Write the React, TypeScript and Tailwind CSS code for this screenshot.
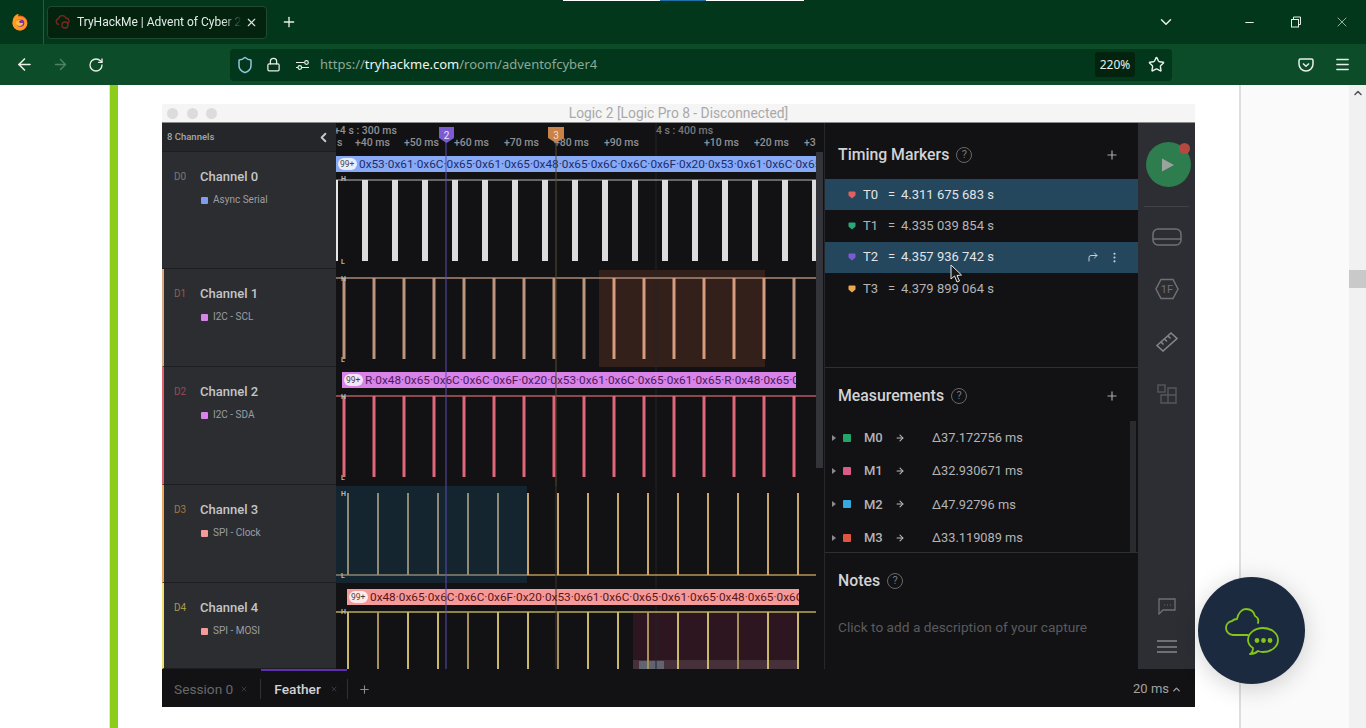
import React from "react";
import { ArrowLeft, ArrowRight, RotateCw, Plus, X, ChevronDown, ChevronLeft, ChevronUp, Minus, Shield, Lock, Star, Menu, CornerUpRight, EllipsisVertical } from "lucide-react";

const range = (start: number, count: number, step = 30) => Array.from({ length: count }, (_, i) => start + i * step);
const hex = (s: string) => s.split(" ").join("\u00B7");

function Waves() {
  const roboto = "Roboto, sans-serif";
  const ruler2: [number, string][] = [[337, "s"], [355, "+40 ms"], [404, "+50 ms"], [454, "+60 ms"], [504, "+70 ms"], [554, "+80 ms"], [604, "+90 ms"], [704, "+10 ms"], [754, "+20 ms"], [804, "+30"]];
  const bubble = (id: string, x: number, y: number, w: number, fill: string, pillFill: string, tx: number, color: string, text: string) => (
    <g>
      <clipPath id={id}><rect x={x} y={y} width={w} height={16} /></clipPath>
      <rect x={x} y={y} width={w} height={16} fill={fill} />
      <rect x={x + 2} y={y + 2} width={19} height={12} rx={6} fill={pillFill} />
      <text x={x + 4} y={y + 11} fontSize={8.5} fontFamily={roboto} fill="#444">99+</text>
      <text x={tx} y={y + 12} fontSize={11.8} fontFamily={roboto} fill={color} clipPath={`url(#${id})`}>{text}</text>
    </g>
  );
  const label = (t: string, y: number) => <text x={341} y={y} fontSize={7} fontWeight={700} fontFamily={roboto} fill="#b5b5b5">{t}</text>;
  return (
    <svg viewBox="336 123 480 546" width={480} height={546} className="block">
      <rect x={336} y={486} width={191} height={97} fill="#14252f" />
      <rect x={599} y={270} width={166} height={97} fill="#33201a" />
      <rect x={633} y={612} width={165} height={57} fill="#2e1620" />
      <rect x={633} y={660} width={165} height={9} fill="#46303a" />
      <rect x={639} y={661} width={25} height={8} fill="#5f6470" />
      <line x1={656} y1={123} x2={656} y2={669} stroke="#222327" strokeWidth={1} />

      {ruler2.map(([x, t]) => <text key={x} x={x} y={146} fontSize={10.5} fontWeight={500} fontFamily={roboto} fill="#8f9094">{t}</text>)}
      <text x={334} y={134} fontSize={10.5} fontWeight={500} fontFamily={roboto} fill="#8f9094">+4 s : 300 ms</text>
      <text x={656} y={134} fontSize={10.5} fontWeight={500} fontFamily={roboto} fill="#77787c">4 s : 400 ms</text>

      {bubble("b0", 336, 156, 480, "#88aaf5", "#e8eefc", 359, "#1b2c6e", hex("0x53 0x61 0x6C 0x65 0x61 0x65 0x48 0x65 0x6C 0x6C 0x6F 0x20 0x53 0x61 0x6C 0x65 0x61"))}
      <line x1={336} y1={180} x2={816} y2={180} stroke="#b9b9b9" strokeWidth={1} />
      <rect x={336} y={180} width={2} height={81} fill="#e6e6e6" />
      {range(365, 16).map((x) => <rect key={x} x={x - 3} y={180} width={6} height={81} fill="#dcdcdc" />)}
      {label("H", 181)}{label("L", 264)}

      <line x1={336} y1={278} x2={816} y2={278} stroke="#a98a76" strokeWidth={1.5} />
      {range(344, 16).map((x) => <rect key={x} x={x - 1.5} y={278} width={3} height={81} fill={x > 600 && x < 770 ? "#d69c7d" : "#bd947c"} />)}
      {label("H", 281)}{label("L", 362)}

      {bubble("b2", 342, 372, 454, "#d883e8", "#f6e4fa", 365, "#4c1a5c", hex("R 0x48 0x65 0x6C 0x6C 0x6F 0x20 0x53 0x61 0x6C 0x65 0x61 0x65 R 0x48 0x65 0x6C"))}
      <line x1={336} y1={396} x2={816} y2={396} stroke="#b35a5f" strokeWidth={1.5} />
      {range(344, 16).map((x) => <rect key={x} x={x - 1.5} y={396} width={3} height={81} fill="#e0667a" />)}
      {label("H", 399)}{label("L", 480)}

      <line x1={336} y1={575} x2={527} y2={575} stroke="#8a8472" strokeWidth={1.5} />
      <line x1={527} y1={575} x2={816} y2={575} stroke="#b8935a" strokeWidth={1.5} />
      {range(348, 16).map((x) => <rect key={x} x={x - 1} y={493} width={2} height={82} fill={x < 520 ? "#8f8a75" : "#c9a669"} />)}
      {label("H", 496)}{label("L", 578)}

      {bubble("b4", 347, 589, 452, "#f59a9a", "#fdeaea", 370, "#5a1414", hex("0x48 0x65 0x6C 0x6C 0x6F 0x20 0x53 0x61 0x6C 0x65 0x61 0x65 0x48 0x65 0x6C 0x6C"))}
      <line x1={336} y1={612} x2={816} y2={612} stroke="#b8ab55" strokeWidth={1.5} />
      {range(348, 16).map((x, i) => <rect key={x} x={x - 1} y={612} width={2} height={57} fill={i % 3 === 1 ? "#a8905a" : "#c9b865"} />)}
      {label("H", 614)}

      <line x1={446} y1={140} x2={446} y2={669} stroke="#5a4cb0" strokeWidth={1} />
      <line x1={556} y1={140} x2={556} y2={486} stroke="#5b4a30" strokeWidth={1} />
      <line x1={556} y1={486} x2={556} y2={669} stroke="#3d3524" strokeWidth={1} />
      <path d="M439 127h15v11l-7.5 5-7.5-5z" fill="#7a5bd0" />
      <text x={446.5} y={139} textAnchor="middle" fontSize={10} fontFamily={roboto} fill="#ece6ff">2</text>
      <path d="M548 127h16v11l-8 5-8-5z" fill="#c9824a" />
      <text x={556} y={139} textAnchor="middle" fontSize={10} fontFamily={roboto} fill="#f5dcc5">3</text>
    </svg>
  );
}

function Channel({ d, name, kind, h, stripe, dColor, sq }: { d: string; name: string; kind: string; h: string; stripe: string; dColor: string; sq: string }) {
  return (
    <div className={`${h} ${stripe} border-l-[2px] border-b border-b-[#1d1e21] pt-[17px] pl-[10px] flex items-start shrink-0`}>
      <span className={`w-[26px] text-[10px] leading-[16px] ${dColor}`}>{d}</span>
      <div>
        <div className="text-[13px] leading-[16px] font-medium text-[#c4c5c7]">{name}</div>
        <div className="flex items-center mt-[9px] pl-px">
          <span className={`w-[7px] h-[7px] rounded-[1px] ${sq}`} />
          <span className="ml-[5px] text-[10px] leading-[12px] text-[#9d9ea1]">{kind}</span>
        </div>
      </div>
    </div>
  );
}

function Help() {
  return <span className="ml-[7px] w-[16px] h-[16px] rounded-full border border-[#66676b] text-[#77787c] text-[11px] leading-[14px] text-center">?</span>;
}

function Heart({ color }: { color: string }) {
  return <svg width="8" height="8" viewBox="0 0 8 8"><path d="M0.5 1.5q0-1 1-1h5q1 0 1 1v3L4 7.5 0.5 4.5z" fill={color} /></svg>;
}

function Marker({ t, v, color, active, tools }: { t: string; v: string; color: string; active?: boolean; tools?: boolean }) {
  return (
    <div className={`h-[31.3px] flex items-center pl-[23px] pr-[17px] text-[13px] ${active ? "bg-[#24475e] text-[#e2e4e6]" : "text-[#b3b4b6]"}`}>
      <Heart color={color} />
      <span className="ml-[7px] w-[25px]">{t}</span>
      <span className="w-[13px]">=</span>
      <span>{v}</span>
      {tools && (
        <span className="ml-auto flex items-center gap-[9px] text-[#c4d0d8]">
          <CornerUpRight size={12} />
          <EllipsisVertical size={13} />
        </span>
      )}
    </div>
  );
}

function Measure({ m, v, color }: { m: string; v: string; color: string }) {
  return (
    <div className="h-[33.4px] flex items-center pl-[7px] text-[13px] text-[#b3b4b6] shrink-0">
      <svg width="4" height="6" viewBox="0 0 4 6"><path d="M0 0l4 3-4 3z" fill="#8a8b8e" /></svg>
      <span className={`ml-[7px] w-[8px] h-[8px] rounded-[1px] ${color}`} />
      <span className="ml-[13px] w-[31px] font-medium">{m}</span>
      <ArrowRight size={10} strokeWidth={2.5} className="text-[#c0c0c0]" />
      <span className="ml-[27px] text-[12.8px]">{v}</span>
    </div>
  );
}

function Rail() {
  const c = "#6f7075";
  return (
    <div className="w-[57px] bg-[#2d2e33] flex flex-col items-center shrink-0">
      <div className="relative mt-[19px] ml-[3px] w-[45px] h-[45px] rounded-full bg-[#2d7d4f] flex items-center justify-center shrink-0">
        <svg width="16" height="16" viewBox="0 0 16 16"><path d="M2 1.5l12 6.5-12 6.5z" fill="#9aa39e" /></svg>
        <span className="absolute right-[1px] top-[1px] w-[11px] h-[11px] rounded-full bg-[#b5483f]" />
      </div>
      <div className="w-[45px] h-px bg-[#404146] mt-[19px] shrink-0" />
      <svg className="mt-[20px] shrink-0" width="30" height="20" viewBox="0 0 30 20" fill="none" stroke={c} strokeWidth="1.5"><rect x="1" y="2" width="28" height="16" rx="5" /><path d="M1 12h28" /></svg>
      <svg className="mt-[31px] shrink-0" width="24" height="22" viewBox="0 0 24 22" fill="none" stroke={c} strokeWidth="1.5"><path d="M6 1.5h12l5 9.5-5 9.5H6L1 11z" /><text x="12" y="15" textAnchor="middle" fontSize="11" fontFamily="Roboto, sans-serif" fill={c} stroke="none">1F</text></svg>
      <svg className="mt-[30px] shrink-0" width="24" height="22" viewBox="0 0 24 22" fill="none" stroke="#84858a" strokeWidth="1.6"><path d="M2 15.5L16 3l6 5.5L8 21z" /><path d="M6 12l2.5 2.5M9.5 9l2.5 2.5M13 6l2.5 2.5" /></svg>
      <svg className="mt-[32px] shrink-0" width="20" height="20" viewBox="0 0 20 20" fill="none" stroke="#56575c" strokeWidth="1.4"><rect x="1" y="1" width="7" height="7" /><path d="M11 4h8v15H4v-8h7z" /><path d="M11 11h8M11 11v8" /></svg>
      <svg className="mt-auto shrink-0" width="18" height="17" viewBox="0 0 18 17" fill="none" stroke={c} strokeWidth="1.3"><path d="M1 1h16v11H5l-4 4z" /><path d="M6 7h.6M9 7h.6M12 7h.6" strokeWidth="1.5" /></svg>
      <div className="mt-[25px] mb-[16px] w-[20px] flex flex-col gap-[3.5px]">
        <span className="h-[2px] bg-[#6f7075]" /><span className="h-[2px] bg-[#6f7075]" /><span className="h-[2px] bg-[#6f7075]" />
      </div>
    </div>
  );
}

function LogicWindow() {
  return (
    <div className="w-[1033px] h-[603px] flex flex-col font-['Roboto',sans-serif]">
      <div className="h-[19px] bg-[#f5f5f5] border-b border-b-[#8a8a8a] flex items-center shrink-0">
        <div className="flex gap-[8.5px] pl-[5px]">
          <span className="w-[11px] h-[11px] rounded-full bg-[#dcdcdc]" />
          <span className="w-[11px] h-[11px] rounded-full bg-[#dcdcdc]" />
          <span className="w-[11px] h-[11px] rounded-full bg-[#dcdcdc]" />
        </div>
        <span className="flex-1 text-center text-[13.8px] text-[#a9a9a9] pr-[55px]">Logic 2 [Logic Pro 8 - Disconnected]</span>
      </div>
      <div className="flex h-[546px] shrink-0 bg-[#121214]">
        <div className="w-[174px] bg-[#2c2d31] flex flex-col shrink-0 overflow-hidden">
          <div className="h-[29px] bg-[#25262a] border-b border-b-[#1d1e21] flex items-center pl-[5px] pr-[5px] justify-between shrink-0">
            <span className="text-[9.5px] font-medium text-[#a5a6a9]">8 Channels</span>
            <ChevronLeft size={15} strokeWidth={3} className="text-[#c8c8c8]" />
          </div>
          <Channel d="D0" name="Channel 0" kind="Async Serial" h="h-[117px]" stripe="border-l-[#2c2d31]" dColor="text-[#77787c]" sq="bg-[#7f9cf0]" />
          <Channel d="D1" name="Channel 1" kind="I2C - SCL" h="h-[98px]" stripe="border-l-[#d9a585]" dColor="text-[#8b5f50]" sq="bg-[#d883e8]" />
          <Channel d="D2" name="Channel 2" kind="I2C - SDA" h="h-[118px]" stripe="border-l-[#e0606f]" dColor="text-[#9a4a55]" sq="bg-[#d883e8]" />
          <Channel d="D3" name="Channel 3" kind="SPI - Clock" h="h-[98px]" stripe="border-l-[#e8a860]" dColor="text-[#a07a42]" sq="bg-[#f59a9a]" />
          <Channel d="D4" name="Channel 4" kind="SPI - MOSI" h="h-[86px]" stripe="border-l-[#e8e070]" dColor="text-[#a89c48]" sq="bg-[#f59a9a]" />
        </div>
        <div className="w-[480px] shrink-0"><Waves /></div>
        <div className="w-[8px] shrink-0 flex flex-col pt-[29px]">
          <div className="h-[316px] w-[7px] bg-[#33343a]" />
        </div>
        <div className="w-[314px] shrink-0 border-l border-l-[#26272b] flex flex-col">
          <div className="h-[245px] border-b border-b-[#2e2f33] shrink-0">
            <div className="h-[56px] flex items-center pl-[13px] pr-[19px] pt-[7px]">
              <span className="text-[15.8px] font-medium text-[#d2d3d5]">Timing Markers</span>
              <Help />
              <Plus size={14} className="ml-auto text-[#a8a9ab]" />
            </div>
            <Marker t="T0" v="4.311 675 683 s" color="#e0605f" active />
            <Marker t="T1" v="4.335 039 854 s" color="#2aa876" />
            <Marker t="T2" v="4.357 936 742 s" color="#7a5bd0" active tools />
            <Marker t="T3" v="4.379 899 064 s" color="#eda84f" />
          </div>
          <div className="h-[185px] border-b border-b-[#2e2f33] shrink-0 flex flex-col relative">
            <div className="h-[53px] flex items-center pl-[13px] pr-[19px] pt-[3px] shrink-0">
              <span className="text-[15.8px] font-medium text-[#d2d3d5]">Measurements</span>
              <Help />
              <Plus size={14} className="ml-auto text-[#a8a9ab]" />
            </div>
            <Measure m="M0" v="Δ37.172756 ms" color="bg-[#22a566]" />
            <Measure m="M1" v="Δ32.930671 ms" color="bg-[#d85c85]" />
            <Measure m="M2" v="Δ47.92796 ms" color="bg-[#35a8e0]" />
            <div className="h-[27px] overflow-hidden"><Measure m="M3" v="Δ33.119089 ms" color="bg-[#e0553f]" /></div>
            <span className="absolute right-[2px] top-[53px] bottom-0 w-[6px] bg-[#2a2b2e]" />
          </div>
          <div className="flex-1 pl-[13px]">
            <div className="flex items-center h-[56px]">
              <span className="text-[15.8px] font-medium text-[#d2d3d5]">Notes</span>
              <Help />
            </div>
            <div className="text-[13.7px] text-[#5a5b5e] mt-[9px] leading-[18px]">Click to add a description of your capture</div>
          </div>
        </div>
        <Rail />
      </div>
      <div className="h-[38px] bg-[#121214] flex items-center relative shrink-0 text-[13.7px] pt-[2px]">
        <span className="absolute left-[99px] top-0 w-[86px] h-[2px] bg-[#5f2fb0]" />
        <span className="ml-[12px] text-[#67686b]">Session 0</span>
        <X size={8} className="ml-[7px] text-[#4a4b4e]" />
        <span className="ml-[12px] w-px h-[20px] bg-[#303135]" />
        <span className="ml-[13px] font-medium text-[#d2d3d5]">Feather</span>
        <X size={8} className="ml-[9px] text-[#4a4b4e]" />
        <span className="ml-[9px] w-px h-[20px] bg-[#303135]" />
        <Plus size={13} className="ml-[10px] text-[#8a8b8e]" />
        <span className="ml-auto text-[13px] text-[#a0a1a3]">20 ms</span>
        <ChevronUp size={11} strokeWidth={3} className="ml-[2px] mr-[13px] text-[#a0a1a3]" />
      </div>
    </div>
  );
}

function Firefox() {
  return (
    <svg width="18" height="18" viewBox="0 0 18 18">
      <circle cx="9" cy="10" r="7.5" fill="#f0592b" />
      <path d="M2 6c1-3 3-5 6-5-1 1-1 2-.5 3 2-1 7 0 8.5 5 0-2-1-3-2-4 2 2 2.5 5 1.5 8C14 16 11 17.5 9 17.5c-4 0-7.500-3-7.500-7.500 0-1.500.5-3 .5-4z" fill="#ff9a1f" />
      <circle cx="9.500" cy="10" r="3.800" fill="#7a2fb0" />
      <path d="M5 9c1-2 4-3 6-2-2 0-3 1-3 2s3 1 4 1c0 2-2 3.500-4 3-2-.5-3.500-2-3-4z" fill="#ffbd3a" />
    </svg>
  );
}

export default function App() {
  return (
    <div className="w-[1366px] h-[728px] overflow-hidden flex flex-col bg-white relative font-['Noto_Sans',sans-serif]">
      <div className="h-[44px] bg-[#03371b] flex items-center relative shrink-0 text-white">
        <div className="absolute top-0 left-[563px] w-[241px] h-px bg-white" />
        <div className="absolute top-0 left-[660px] w-[46px] h-px bg-[#1f6fa8]" />
        <div className="w-[44px] h-full flex items-center justify-center border-r border-r-[#2d5a3e] shrink-0 pr-[4px]"><Firefox /></div>
        <div className="ml-[3px] w-[220px] h-[33px] bg-[#03230f] border border-[#1f4a30] rounded-[4px] flex items-center pl-[7px] shrink-0">
          <svg width="16" height="14" viewBox="0 0 16 14" fill="none" stroke="#7a2a20" strokeWidth="1.300"><path d="M4 9.500a3 3 0 0 1-.5-5.900A4 4 0 0 1 11 3a3 3 0 0 1 1.500 5.600" /><circle cx="10" cy="10" r="3" /></svg>
          <span className="ml-[6px] w-[165px] whitespace-nowrap overflow-hidden font-['Roboto',sans-serif] text-[12px] text-[#e4ebe6] [mask-image:linear-gradient(to_right,black_88%,transparent)]">TryHackMe | Advent of Cyber 2022</span>
          <X size={13} className="ml-[3px] text-[#dfe6e1]" />
        </div>
        <Plus size={16} className="ml-[14px] text-[#e8efe9]" />
        <ChevronDown size={18} className="ml-[860px] text-[#e8efe9]" />
        <Minus size={13} className="ml-[68px] text-[#e8efe9]" />
        <svg className="ml-[34px]" width="12" height="12" viewBox="0 0 12 12" fill="none" stroke="#e8efe9" strokeWidth="1"><rect x="1.500" y="3.500" width="7" height="7.500" /><path d="M3.500 3.500V1h7v7.500H8.500" /></svg>
        <X size={16} strokeWidth={1} className="ml-[32px] text-[#e8efe9]" />
      </div>
      <div className="h-[41px] bg-[#0d4c28] flex items-center shrink-0 text-[#e8efe9]">
        <ArrowLeft size={19} className="ml-[15px]" />
        <ArrowRight size={17} className="ml-[18px] text-[#4f8263]" />
        <RotateCw size={16} className="ml-[19px]" />
        <div className="ml-[126px] w-[942px] h-[32px] bg-[#03371b] rounded-[4px] flex items-center shrink-0">
          <Shield size={18} className="ml-[6px] text-[#8fc6e0]" />
          <Lock size={15} className="ml-[12px]" />
          <svg className="ml-[14px]" width="15" height="12" viewBox="0 0 15 12" fill="none" stroke="#e8efe9" strokeWidth="1.200"><path d="M1 3.500h8M1 8.500h2M7 8.500h7" /><circle cx="11.500" cy="3.500" r="1.800" /><circle cx="4.800" cy="8.500" r="1.800" /></svg>
          <span className="ml-[10px] text-[13px] text-[#8ba898] whitespace-nowrap">https://<span className="text-[#f0f4f1]">tryhackme.com</span>/room/adventofcyber4</span>
          <span className="ml-auto w-[40px] h-[25px] bg-[#03230f] rounded-[3px] text-[12px] leading-[25px] text-center text-[#e8efe9]">220%</span>
          <Star size={17} className="ml-[13px] mr-[7px]" />
        </div>
        <svg className="ml-[126px]" width="16" height="16" viewBox="0 0 16 16" fill="none" stroke="#e8efe9" strokeWidth="1.500"><path d="M2.500 2h11a1.500 1.500 0 0 1 1.500 1.500V7a7 7 0 0 1-14 0V3.500A1.500 1.500 0 0 1 2.500 2z" /><path d="M5 6.500l3 2.800 3-2.800" /></svg>
        <Menu size={17} className="ml-[20px]" />
      </div>
      <div className="flex-1 flex min-h-0">
        <div className="w-[110px] bg-white border-r border-r-[#e4e4e4] shrink-0" />
        <div className="w-[8px] bg-[#8ccc1a] shrink-0" />
        <div className="w-[1123px] bg-white pl-[44px] pt-[19px] border-r-2 border-r-[#dedede] shrink-0"><LogicWindow /></div>
        <div className="flex-1 bg-[#fafafa]" />
        <div className="w-[17px] bg-[#f1f1f1] flex flex-col items-center shrink-0">
          <ChevronUp size={12} strokeWidth={3} className="mt-[2px] text-[#505050]" />
          <div className="mt-[171px] w-full h-[18px] bg-[#c9c9c9]" />
        </div>
      </div>
      <div className="absolute left-[1198px] top-[577px] w-[107px] h-[107px] rounded-full bg-[#1c2a40] shadow-[0_4px_24px_rgba(0,0,0,0.18)] flex items-center justify-center">
        <svg width="54" height="48" viewBox="0 0 54 48" fill="none" stroke="#85c51a" strokeWidth="1.800" strokeLinejoin="round" strokeLinecap="round">
          <path d="M23 28H8a7 7 0 0 1-7-7 7 7 0 0 1 6-7 8 8 0 0 1 5-2C13 6 17 2 21 2c5 0 8 3 9 7a6 6 0 0 1 3 7" />
          <path d="M38 21c8 0 15 5 15 12s-7 12-15 12c-2 0-3 0-5-1-2 2-5 3-8 3 2-1 3-3 3-6-3-2-5-5-5-8 0-7 7-12 15-12z" />
          <circle cx="32" cy="33.500" r="1.500" fill="#85c51a" /><circle cx="38.500" cy="33.500" r="1.500" fill="#85c51a" /><circle cx="45" cy="33.500" r="1.500" fill="#85c51a" />
        </svg>
      </div>
      <svg className="absolute left-[950px] top-[264px]" width="13" height="19" viewBox="0 0 13 19"><path d="M1 1v14l3.500-3 2.500 6 2.500-1-2.500-5.500 4.500-.5z" fill="#1a1a1a" stroke="#e8e8e8" strokeWidth="1" /></svg>
    </div>
  );
}
